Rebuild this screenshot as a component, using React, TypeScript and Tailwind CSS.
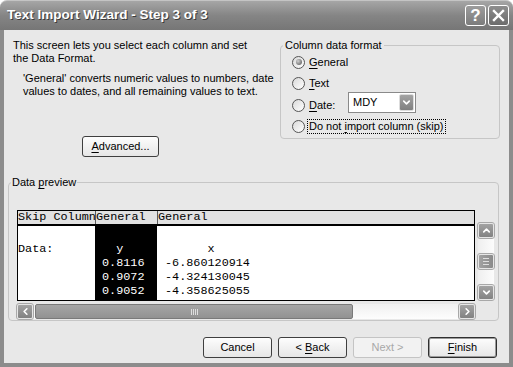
import React from 'react';
import { ChevronDown, ChevronUp, ChevronLeft, ChevronRight } from 'lucide-react';

const mono = "[font-family:'Liberation_Mono','Courier_New',monospace]";

const Btn = ({ children, kind = 'normal', w = 'w-[69px]' }: { children: React.ReactNode; kind?: 'normal' | 'default' | 'disabled'; w?: string }) => {
  const look =
    kind === 'disabled'
      ? 'border-[#c4c4c4] text-[#a8a8a8] bg-[#f2f2f2]'
      : kind === 'default'
      ? 'border-[#2f2f2f] shadow-[inset_0_0_0_1px_#9a9a9a] bg-linear-to-b from-[#fdfdfd] to-[#e6e6e6]'
      : 'border-[#3f3f3f] bg-linear-to-b from-[#fdfdfd] to-[#e6e6e6]';
  return (
    <div className={`${w} h-[21px] shrink-0 rounded-[3px] border flex items-center justify-center ${look}`}>
      <span className="whitespace-pre">{children}</span>
    </div>
  );
};

const Radio = ({ on }: { on?: boolean }) => (
  <span className="w-[13px] h-[13px] shrink-0 rounded-full border border-[#555] bg-linear-to-br from-[#d9d9d9] to-white flex items-center justify-center">
    {on && <span className="w-[6px] h-[6px] rounded-full bg-[radial-gradient(circle_at_35%_35%,#d0d0d0,#777_70%)]" />}
  </span>
);

const SBtn = ({ children }: { children: React.ReactNode }) => (
  <div className="w-[16px] h-[15px] shrink-0 rounded-[2px] border border-[#e6e6e6] outline outline-[#a8a8a8] bg-linear-to-b from-[#a3a3a3] to-[#828282] flex items-center justify-center text-white">
    {children}
  </div>
);

const U = ({ children }: { children: React.ReactNode }) => <span className="underline underline-offset-[2px]">{children}</span>;

export default function App() {
  const col2 = ['', '  y', '0.8116', '0.9072', '0.9052'];
  const col3 = ['', '      x', '-6.860120914', '-4.324130045', '-4.358625055'];

  return (
    <div className="w-[513px] h-[367px] overflow-hidden bg-white">
      <div className="w-[513px] h-[367px] flex flex-col text-[11px] text-black [font-family:'Liberation_Sans',Arial,sans-serif]">
        {/* title bar */}
        <div className="h-[30px] shrink-0 rounded-t-[7px] border-t border-[#c4c4c4] bg-linear-to-b from-[#a6a6a6] via-[#858585] to-[#767676] flex items-center pl-[7px] pr-[4px]">
          <span className="text-white font-bold text-[13.5px] [text-shadow:1px_1px_0_#3a3a3a]">Text Import Wizard - Step 3 of 3</span>
          <div className="ml-auto flex gap-[2px]">
            <div className="w-[21px] h-[21px] rounded-[3px] border border-white bg-linear-to-b from-[#9c9c9c] to-[#7c7c7c] flex items-center justify-center text-white font-bold text-[17px] leading-none">?</div>
            <div className="w-[21px] h-[21px] rounded-[3px] border border-white bg-linear-to-b from-[#8e8e8e] to-[#6c6c6c] flex items-center justify-center">
              <svg width="13" height="13" viewBox="0 0 13 13">
                <path d="M2 2 L11 11 M11 2 L2 11" stroke="white" strokeWidth="2.4" strokeLinecap="square" />
              </svg>
            </div>
          </div>
        </div>

        {/* body */}
        <div className="flex-1 bg-[#e8e8e8] border-x-4 border-b-4 border-[#8c8c8c] flex flex-col">
          <div className="flex mt-[9px]">
            <div className="w-[276px] pl-[9px]">
              <p className="leading-[13px]">
                This screen lets you select each column and set
                <br />
                the Data Format.
              </p>
              <p className="leading-[13px] pl-[10px] mt-[7px]">
                'General' converts numeric values to numbers, date
                <br />
                values to dates, and all remaining values to text.
              </p>
              <div className="mt-[38px] ml-[69px]">
                <Btn w="w-[77px]">
                  <U>A</U>dvanced...
                </Btn>
              </div>
            </div>

            <fieldset className="w-[220px] h-[100px] border border-[#c6c6c6] rounded-[4px] px-[2px]">
              <legend className="px-[2px] leading-[13px]">Column data format</legend>
              <div className="pl-[9px] flex flex-col gap-[1.5px]">
                <div className="h-[20px] flex items-center gap-[4px]">
                  <Radio on />
                  <span>
                    <U>G</U>eneral
                  </span>
                </div>
                <div className="h-[20px] flex items-center gap-[4px]">
                  <Radio />
                  <span>
                    <U>T</U>ext
                  </span>
                </div>
                <div className="h-[20px] flex items-center gap-[4px]">
                  <Radio />
                  <span className="w-[35px]">
                    <U>D</U>ate:
                  </span>
                  <div className="w-[68px] h-[21px] mb-[5px] border border-[#8a8a8a] bg-white flex items-center">
                    <span className="pl-[4px] flex-1">MDY</span>
                    <div className="w-[15px] h-[17px] mr-[1px] rounded-[2px] border border-[#dcdcdc] bg-linear-to-b from-[#a3a3a3] to-[#808080] flex items-center justify-center text-white">
                      <ChevronDown size={11} strokeWidth={3.5} />
                    </div>
                  </div>
                </div>
                <div className="h-[20px] flex items-center gap-[2px]">
                  <Radio />
                  <span className="border border-dotted border-black px-[1px] leading-[13px]">
                    Do not <U>i</U>mport column (skip)
                  </span>
                </div>
              </div>
            </fieldset>
          </div>

          {/* data preview */}
          <fieldset className="ml-[4px] mt-[19px] w-[491px] border border-[#c6c6c6] rounded-[4px] px-[2px] pb-[1px]">
            <legend className="px-[1px] leading-[13px]">
              Data <U>p</U>review
            </legend>
            <div className="pl-[6px] mt-[21px] flex">
              <div className={`w-[458px] h-[91px] border border-black bg-white flex flex-col text-[11.8px] ${mono}`}>
                <div className="h-[15px] shrink-0 flex bg-[#e1e1e1] border-b-2 border-black leading-[13px] whitespace-pre overflow-hidden">
                  <div className="w-[78px] border-r border-[#5a5a5a] overflow-hidden">Skip Column</div>
                  <div className="w-[62px] border-r border-[#5a5a5a]">General</div>
                  <div className="flex-1">General</div>
                </div>
                <div className="flex-1 flex leading-[14px] whitespace-pre">
                  <div className="w-[77px] pt-[2px]">
                    <div className="h-[14px]"></div>
                    <div>Data:</div>
                  </div>
                  <div className="w-[62px] bg-black text-white pl-[7px] pt-[2px]">
                    {col2.map((t, i) => (
                      <div key={i} className="h-[14px]">{t}</div>
                    ))}
                  </div>
                  <div className="flex-1 pl-[8px] pt-[2px]">
                    {col3.map((t, i) => (
                      <div key={i} className="h-[14px]">{t}</div>
                    ))}
                  </div>
                </div>
              </div>
              <div className="ml-[3px] w-[16px] h-[77px] self-end mb-[1px] flex flex-col justify-between bg-linear-to-r from-[#efefef] to-[#fcfcfc]">
                <SBtn>
                  <ChevronUp size={11} strokeWidth={3.5} />
                </SBtn>
                <div className="w-[16px] h-[15px] rounded-[2px] border border-[#e6e6e6] outline outline-[#a8a8a8] bg-linear-to-r from-[#a3a3a3] to-[#8a8a8a] flex flex-col items-center justify-center gap-[2px]">
                  <div className="w-[6px] h-px bg-[#dedede]" />
                  <div className="w-[6px] h-px bg-[#dedede]" />
                  <div className="w-[6px] h-px bg-[#dedede]" />
                </div>
                <SBtn>
                  <ChevronDown size={11} strokeWidth={3.5} />
                </SBtn>
              </div>
            </div>
            <div className="pl-[6px] mt-[3px]">
              <div className="w-[458px] h-[15px] flex items-center bg-linear-to-b from-[#f0f0f0] to-[#fdfdfd]">
                <SBtn>
                  <ChevronLeft size={11} strokeWidth={3.5} />
                </SBtn>
                <div className="ml-[2px] w-[318px] h-[15px] rounded-[2px] border border-[#7a7a7a] bg-linear-to-b from-[#a6a6a6] to-[#929292] flex items-center justify-center gap-[1px]">
                  <div className="w-px h-[6px] bg-[#dedede]" />
                  <div className="w-px h-[6px] bg-[#dedede]" />
                  <div className="w-px h-[6px] bg-[#dedede]" />
                  <div className="w-px h-[6px] bg-[#dedede]" />
                </div>
                <div className="flex-1" />
                <SBtn>
                  <ChevronRight size={11} strokeWidth={3.5} />
                </SBtn>
              </div>
            </div>
          </fieldset>

          <div className="mt-[16px] flex justify-end gap-[6px] pr-[12px]">
            <Btn>Cancel</Btn>
            <Btn>
              {'< '}
              <U>B</U>ack
            </Btn>
            <Btn kind="disabled">Next &gt;</Btn>
            <Btn kind="default">
              <U>F</U>inish
            </Btn>
          </div>
        </div>
      </div>
    </div>
  );
}
